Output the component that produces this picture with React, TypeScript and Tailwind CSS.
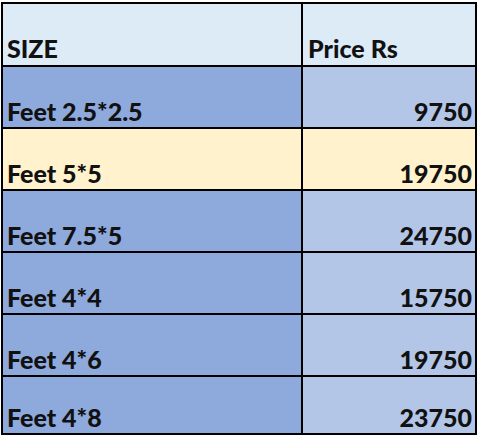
import React from 'react';

const rows = [
  { size: 'Feet 2.5*2.5', price: '9750', yellow: false },
  { size: 'Feet 5*5', price: '19750', yellow: true },
  { size: 'Feet 7.5*5', price: '24750', yellow: false },
  { size: 'Feet 4*4', price: '15750', yellow: false },
  { size: 'Feet 4*6', price: '19750', yellow: false },
  { size: 'Feet 4*8', price: '23750', yellow: false },
];

export default function App() {
  return (
    <div className="w-[478px] h-[437px] overflow-hidden bg-white pt-[2px] pl-[1px]">
      <div
        className="w-[476px] border-2 border-black bg-black grid grid-cols-[298px_1fr] grid-rows-[61px_repeat(5,60px)_56px] gap-[2px] text-[25px] font-black text-[#111] leading-none"
        style={{ fontFamily: 'Lato, "Open Sans", sans-serif' }}
      >
        {/* Header */}
        <div className="bg-[#ddebf7] flex items-end pl-[4px] pb-[4px]">SIZE</div>
        <div className="bg-[#ddebf7] flex items-end pl-[5px] pb-[4px]">Price Rs</div>

        {rows.map((r, i) => (
          <React.Fragment key={i}>
            <div
              className={`${r.yellow ? 'bg-[#fff2cc]' : 'bg-[#8ea9db]'} flex items-end pl-[4px] pb-[3px]`}
            >
              {r.size}
            </div>
            <div
              className={`${r.yellow ? 'bg-[#fff2cc]' : 'bg-[#b4c6e7]'} flex items-end justify-end pr-[3px] pb-[3px]`}
            >
              {r.price}
            </div>
          </React.Fragment>
        ))}
      </div>
    </div>
  );
}
